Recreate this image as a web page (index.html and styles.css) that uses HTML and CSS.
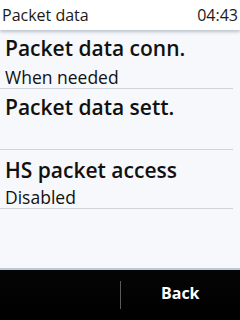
FILE: index.html
```html
<!DOCTYPE html>
<html>
<head>
<meta charset="utf-8">
<link rel="stylesheet" href="styles.css">
</head>
<body>
<div class="screen">
  <header class="status">
    <span class="title">Packet data</span>
    <span class="time">04:43</span>
  </header>
  <main class="list">
    <div class="item item-a">
      <div class="label">Packet data conn.</div>
      <div class="value">When needed</div>
    </div>
    <div class="item item-b">
      <div class="label">Packet data sett.</div>
    </div>
    <div class="item item-c">
      <div class="label">HS packet access</div>
      <div class="value">Disabled</div>
    </div>
  </main>
  <footer class="softkeys">
    <div class="key"></div>
    <div class="sep"></div>
    <div class="key back">Back</div>
  </footer>
</div>
</body>
</html>
```
FILE: styles.css
```css
html, body {
  margin: 0;
  padding: 0;
  width: 240px;
  height: 320px;
  overflow: hidden;
}
body {
  font-family: "Open Sans", "DejaVu Sans", sans-serif;
  color: #111;
}
.screen {
  width: 240px;
  height: 320px;
  display: flex;
  flex-direction: column;
  background: #f6f8fb;
}
.status {
  height: 30px;
  display: flex;
  justify-content: space-between;
  align-items: center;
  padding: 0 2px 0 2px;
  background: #ffffff;
  font-size: 16px;
  color: #1a1a1a;
  box-shadow: 0 2px 3px rgba(120,130,150,0.45);
  position: relative;
  z-index: 1;
}
.list {
  flex: 1;
  display: flex;
  flex-direction: column;
}
.item {
  border-bottom: 1px solid #cfd3da;
  margin-right: 7px;
  padding-left: 5px;
  box-sizing: border-box;
}
.label {
  font-size: 21px;
  font-weight: 600;
  line-height: 24px;
}
.value {
  font-size: 17.5px;
  line-height: 20px;
}
.item-a { height: 59px; padding-top: 6px; }
.item-a .value { margin-top: 7px; }
.item-b { height: 61px; padding-top: 6px; }
.item-c { height: 59px; padding-top: 8px; }
.item-c .value { margin-top: 5px; }
.softkeys {
  height: 50px;
  background: linear-gradient(#050505, #000);
  border-top: 2px solid #b9c6dc;
  display: flex;
  align-items: center;
}
.key {
  flex: 1;
  text-align: center;
  color: #fff;
  font-weight: 700;
  font-size: 16px;
}
.back { padding-bottom: 4px; }
.sep {
  width: 1px;
  height: 28px;
  background: #5a5a5a;
}
```
